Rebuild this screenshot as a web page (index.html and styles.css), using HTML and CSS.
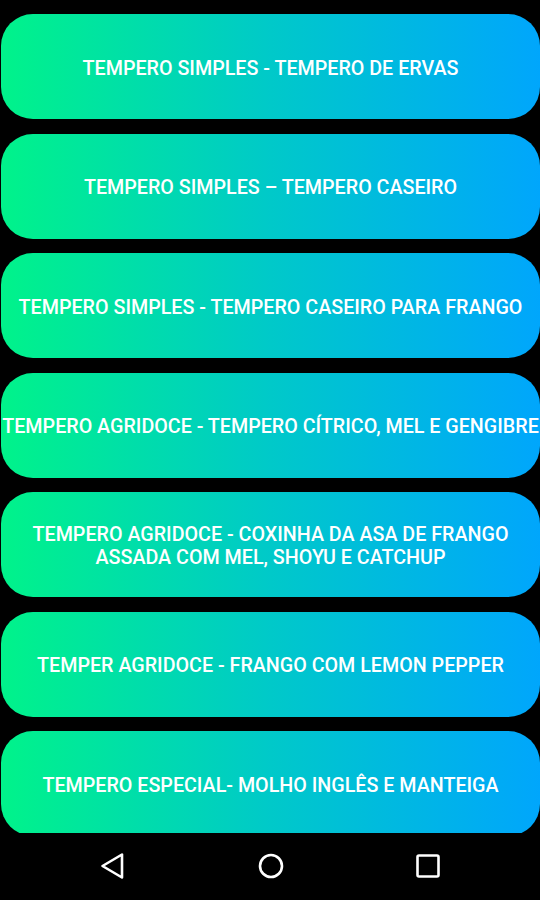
FILE: index.html
```html
<!DOCTYPE html>
<html>
<head>
    <title>Temperos</title>
    <link rel="stylesheet" href="styles.css">
</head>
<body>
    <div class="tela">
        <div class="lista">
            <button class="receita">TEMPERO SIMPLES - TEMPERO DE ERVAS</button>
            <button class="receita">TEMPERO SIMPLES – TEMPERO CASEIRO</button>
            <button class="receita">TEMPERO SIMPLES - TEMPERO CASEIRO PARA FRANGO</button>
            <button class="receita">TEMPERO AGRIDOCE - TEMPERO CÍTRICO, MEL E GENGIBRE</button>
            <button class="receita">TEMPERO AGRIDOCE - COXINHA DA ASA DE FRANGO<br>ASSADA COM MEL, SHOYU E CATCHUP</button>
            <button class="receita">TEMPER AGRIDOCE - FRANGO COM LEMON PEPPER</button>
            <button class="receita">TEMPERO ESPECIAL- MOLHO INGLÊS E MANTEIGA</button>
        </div>
        <div class="navbar">
            <svg width="30" height="30" viewBox="0 0 30 30">
                <path d="M24 3.5 L24 26.5 L4.5 15 Z" fill="none" stroke="#fff" stroke-width="2.6" stroke-linejoin="round"/>
            </svg>
            <svg width="30" height="30" viewBox="0 0 30 30">
                <circle cx="15" cy="15" r="11" fill="none" stroke="#fff" stroke-width="2.6"/>
            </svg>
            <svg width="30" height="30" viewBox="0 0 30 30">
                <rect x="4.5" y="4.5" width="21" height="21" rx="1.5" fill="none" stroke="#fff" stroke-width="2.6"/>
            </svg>
        </div>
    </div>
</body>
</html>
```

FILE: styles.css
```css
body {
    margin: 0;
    background-color: #000;
    font-family: Roboto, "Liberation Sans", sans-serif;
}
.tela {
    display: flex;
    flex-direction: column;
    height: 900px;
}
.lista {
    height: 833px;
    overflow: hidden;
    display: flex;
    flex-direction: column;
    gap: 14.5px;
    padding: 14px 0 0 1px;
    box-sizing: border-box;
}
.receita {
    flex-shrink: 0;
    width: 539px;
    height: 105px;
    border: none;
    border-radius: 32px;
    background: linear-gradient(to right, #00f38a, #00c9c9 50%, #00a6fc);
    color: #fff;
    font-family: Roboto, "Liberation Sans", sans-serif;
    font-weight: 500;
    font-size: 19.7px;
    line-height: 23px;
    text-align: center;
    padding: 3px 0 0;
    white-space: nowrap;
}
.navbar {
    flex: 1;
    display: flex;
    justify-content: space-between;
    align-items: center;
    padding: 0 97px 2px 98px;
}
```
